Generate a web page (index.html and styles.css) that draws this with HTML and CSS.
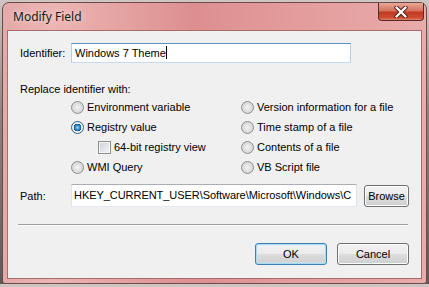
FILE: index.html
```html
<!DOCTYPE html>
<html lang="en">
<head>
  <meta charset="UTF-8" />
  <title>Modify Field</title>
  <link rel="stylesheet" href="styles.css">
</head>
<body>
  <div class="window">
    <div class="titlebar">
      <span class="title">Modify Field</span>
      <button class="close-button">
        <svg class="close-x" width="14" height="12" viewBox="0 0 14 12">
          <path d="M2.5 1.5 L11.5 10.5 M11.5 1.5 L2.5 10.5" stroke="#4a1a14" stroke-width="4.2" stroke-linecap="round"/>
          <path d="M2.5 1.5 L11.5 10.5 M11.5 1.5 L2.5 10.5" stroke="#ffffff" stroke-width="2.4" stroke-linecap="round"/>
        </svg>
      </button>
    </div>

    <div class="client">
      <div class="field-row identifier-row">
        <span class="field-label">Identifier:</span>
        <div class="textbox focused">Windows 7 Theme<span class="caret"></span></div>
      </div>

      <div class="group-label">Replace identifier with:</div>

      <div class="options">
        <div class="option"><span class="radio"></span>Environment variable</div>
        <div class="option"><span class="radio"></span>Version information for a file</div>
        <div class="option"><span class="radio checked"></span>Registry value</div>
        <div class="option"><span class="radio"></span>Time stamp of a file</div>
        <div class="option sub-option"><span class="checkbox"></span>64-bit registry view</div>
        <div class="option"><span class="radio"></span>Contents of a file</div>
        <div class="option"><span class="radio"></span>WMI Query</div>
        <div class="option"><span class="radio"></span>VB Script file</div>
      </div>

      <div class="field-row path-row">
        <span class="field-label">Path:</span>
        <div class="textbox path-box">HKEY_CURRENT_USER\Software\Microsoft\Windows\C</div>
        <button class="button browse-button">Browse</button>
      </div>

      <div class="separator"></div>

      <div class="button-group">
        <button class="button default-button">OK</button>
        <button class="button">Cancel</button>
      </div>
    </div>
  </div>
</body>
</html>
```

FILE: styles.css
```css
body {
  margin: 0;
  background: linear-gradient(#cfc6c4 0, #8c8482 40%, #5e5958 100%);
  font-family: "Liberation Sans", Arial, sans-serif;
  font-size: 11px;
  color: #000;
}
.window {
  width: 425px;
  height: 282px;
  margin: 2px 0 0 2px;
  box-sizing: border-box;
  border: 1px solid #6e4c4c;
  border-radius: 7px 7px 3px 3px;
  padding: 0 4px 4px 4px;
  background: linear-gradient(90deg, #e4a9a9 0%, #ebb5b3 12%, #dd8f90 45%, #e49c9c 70%, #e8acab 100%);
}
.titlebar {
  height: 27px;
  display: flex;
  justify-content: space-between;
  align-items: flex-start;
  padding-left: 6px;
}
.title {
  align-self: center;
  font-family: "Noto Sans", "Open Sans", sans-serif;
  font-size: 12px;
  color: #1a1a1a;
  text-shadow: 0 0 6px rgba(255,255,255,0.8);
}
.close-button {
  width: 46px;
  height: 18px;
  margin-right: -2px;
  padding: 0;
  border: 1px solid #5c2a24;
  border-top: none;
  border-radius: 0 0 4px 4px;
  background: linear-gradient(#e8a798 0%, #d5735f 45%, #c13a22 55%, #cc4a30 85%, #e0806a 100%);
  display: flex;
  align-items: center;
  justify-content: center;
}
.close-x {
  display: block;
}
.client {
  height: 249px;
  box-sizing: border-box;
  border: 1px solid #a86c6c;
  background: #f0f0f0;
  padding: 0 12px;
}
.field-row {
  display: flex;
  align-items: center;
}
.identifier-row {
  margin-top: 12px;
}
.field-label {
  width: 51px;
  flex-shrink: 0;
}
.textbox {
  height: 20px;
  box-sizing: border-box;
  flex-shrink: 0;
  background: #fff;
  border: 1px solid #abadb3;
  border-color: #abadb3 #dbdfe6 #e3e9ef #e2e3ea;
  padding: 0 3px;
  line-height: 18px;
  white-space: nowrap;
  overflow: hidden;
}
.textbox.focused {
  width: 280px;
  border-color: #5c93bc #b5cfe7 #c5daed #b5cfe7;
}
.caret {
  display: inline-block;
  width: 1px;
  height: 13px;
  background: #000;
  vertical-align: -2px;
}
.group-label {
  margin-top: 19px;
  line-height: 14px;
}
.options {
  margin-top: 1px;
  padding-left: 51px;
  display: grid;
  grid-template-columns: 170px 1fr;
  grid-auto-rows: 20px;
}
.option {
  display: flex;
  align-items: center;
  gap: 3px;
}
.sub-option {
  padding-left: 27px;
}
.radio {
  width: 13px;
  height: 13px;
  box-sizing: border-box;
  border-radius: 50%;
  border: 1px solid #8e8f8f;
  background: radial-gradient(circle at 50% 50%, #f4f4f4 0, #dcdcdc 55%, #cfcfcf 100%);
}
.radio.checked {
  border-color: #2c628b;
  background: radial-gradient(circle at 50% 50%, #9fd5f7 0, #2c8ac8 30%, #1c4f7a 48%, #f2f2f2 52%, #e0e0e0 100%);
}
.checkbox {
  width: 13px;
  height: 13px;
  box-sizing: border-box;
  border: 1px solid #8e8f8f;
  background: linear-gradient(135deg, #cbcfd5 0, #f6f6f6 100%);
  box-shadow: inset 0 0 0 1px #f4f4f4;
}
.path-row {
  margin-top: 7px;
}
.path-box {
  width: 286px;
  height: 23px;
  line-height: 21px;
  padding: 0 2px;
  letter-spacing: -0.05px;
}
.button {
  height: 22px;
  padding: 0;
  box-sizing: border-box;
  border: 1px solid #707070;
  border-radius: 3px;
  background: linear-gradient(#f2f2f2 0%, #ebebeb 49%, #dddddd 51%, #cfcfcf 100%);
  box-shadow: inset 0 0 0 1px #fcfcfc;
  font-family: "Liberation Sans", Arial, sans-serif;
  font-size: 11px;
  color: #000;
}
.browse-button {
  width: 45px;
  margin-left: 7px;
  flex-shrink: 0;
}
.separator {
  margin: 17px 1px 0 -2px;
  border-top: 1px solid #a0a0a0;
  border-bottom: 1px solid #fff;
}
.button-group {
  margin-top: 17px;
  display: flex;
  justify-content: flex-end;
  gap: 10px;
}
.button-group .button {
  width: 72px;
}
.default-button {
  border-color: #3c7fb1;
  box-shadow: inset 0 0 0 1px #a8dcf4, inset 0 0 2px 1px #c8ebfa;
}
```
